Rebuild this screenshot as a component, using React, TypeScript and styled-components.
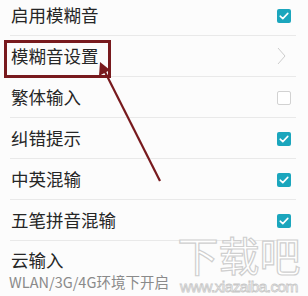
import { FC } from 'react'
import styled, { createGlobalStyle } from 'styled-components'

const GlobalStyle = createGlobalStyle`
  html, body {
    margin: 0;
    padding: 0;
    background: #fff;
  }
  body {
    font-family: "Noto Sans CJK SC", "Noto Sans", sans-serif;
    overflow: hidden;
  }
`

const Screen = styled.div`
  position: relative;
  width: 308px;
  height: 296px;
  overflow: hidden;
  background: #fcfcfc;
`

const List = styled.div`
  display: flex;
  flex-direction: column;
  margin-top: -5px;
  padding: 0 12px 0 10px;
`

const Row = styled.div<{ $last?: boolean }>`
  display: flex;
  align-items: center;
  justify-content: space-between;
  height: ${(p) => (p.$last ? 'auto' : '40px')};
  padding: ${(p) => (p.$last ? '7px 0 0' : '0')};
  border-bottom: ${(p) => (p.$last ? 'none' : '1px solid #e9e9e9')};
`

const Label = styled.div`
  display: flex;
  flex-direction: column;
  padding-left: 1px;

  .title {
    font-size: 17.5px;
    line-height: 24px;
    color: #262626;
  }
  .sub-title {
    font-size: 14.5px;
    line-height: 20px;
    margin-left: -2px;
    color: #8a8a8a;
  }
`

const Check = styled.div<{ $on: boolean }>`
  width: 14px;
  height: 14px;
  margin-right: 5px;
  margin-top: 2px;
  box-sizing: border-box;
  border-radius: 2px;
  display: flex;
  align-items: center;
  justify-content: center;
  background: ${(p) => (p.$on ? '#1ba6bd' : '#fff')};
  border: ${(p) => (p.$on ? 'none' : '1px solid #d2d2d2')};
`

const Chevron = styled.div`
  margin-right: 10px;
  display: flex;
`

const Highlight = styled.div`
  position: absolute;
  left: 4px;
  top: 40px;
  width: 107px;
  height: 38px;
  box-sizing: border-box;
  border: 3px solid #781a1e;
`

const Pointer = styled.svg`
  position: absolute;
  left: 0;
  top: 0;
  pointer-events: none;
`

const Watermark = styled.div`
  position: absolute;
  left: 177px;
  top: 229px;
  width: 124px;
  display: flex;
  flex-direction: column;
  align-items: center;

  .big {
    font-family: "Noto Sans CJK SC", sans-serif;
    font-size: 41px;
    line-height: 50px;
    font-weight: 400;
    color: #fff;
    -webkit-text-stroke: 1.2px #cfcfcf;
  }
  .url {
    font-family: "Liberation Sans", sans-serif;
    font-size: 15.5px;
    line-height: 16px;
    color: #fff;
    -webkit-text-stroke: 0.8px #c8c8c8;
    letter-spacing: -0.6px;
  }
`

type TItem = {
  title: string
  kind: 'on' | 'off' | 'link' | 'text'
  sub?: string
}

const items: TItem[] = [
  { title: '启用模糊音', kind: 'on' },
  { title: '模糊音设置', kind: 'link' },
  { title: '繁体输入', kind: 'off' },
  { title: '纠错提示', kind: 'on' },
  { title: '中英混输', kind: 'on' },
  { title: '五笔拼音混输', kind: 'on' },
  { title: '云输入', kind: 'text', sub: 'WLAN/3G/4G环境下开启' },
]

const App: FC = () => {
  return (
    <Screen>
      <GlobalStyle />
      <List>
        {items.map((item, index) => {
          const key = `${item.title}${index}`
          return (
            <Row key={key} $last={item.kind === 'text'}>
              <Label>
                <div className="title">{item.title}</div>
                {item.sub && <div className="sub-title">{item.sub}</div>}
              </Label>
              {(item.kind === 'on' || item.kind === 'off') && (
                <Check $on={item.kind === 'on'}>
                  {item.kind === 'on' && (
                    <svg width="10" height="8" viewBox="0 0 10 8">
                      <path d="M1.2 4.2 L3.8 6.6 L8.8 1.4" fill="none" stroke="#fff" strokeWidth="1.6" strokeLinecap="round" strokeLinejoin="round" />
                    </svg>
                  )}
                </Check>
              )}
              {item.kind === 'link' && (
                <Chevron>
                  <svg width="9" height="18" viewBox="0 0 9 18">
                    <path d="M1 1 L8 9 L1 17" fill="none" stroke="#cdcdcd" strokeWidth="1" />
                  </svg>
                </Chevron>
              )}
            </Row>
          )
        })}
      </List>
      <Highlight />
      <Pointer width="308" height="296" viewBox="0 0 308 296">
        <line x1="160" y1="181" x2="104" y2="70" stroke="#781a1e" strokeWidth="2.2" />
        <polygon points="100,62 99,76 110,70" fill="#781a1e" />
      </Pointer>
      <Watermark>
        <div className="big">下载吧</div>
        <div className="url">www.xiazaiba.com</div>
      </Watermark>
    </Screen>
  )
}

export default App
